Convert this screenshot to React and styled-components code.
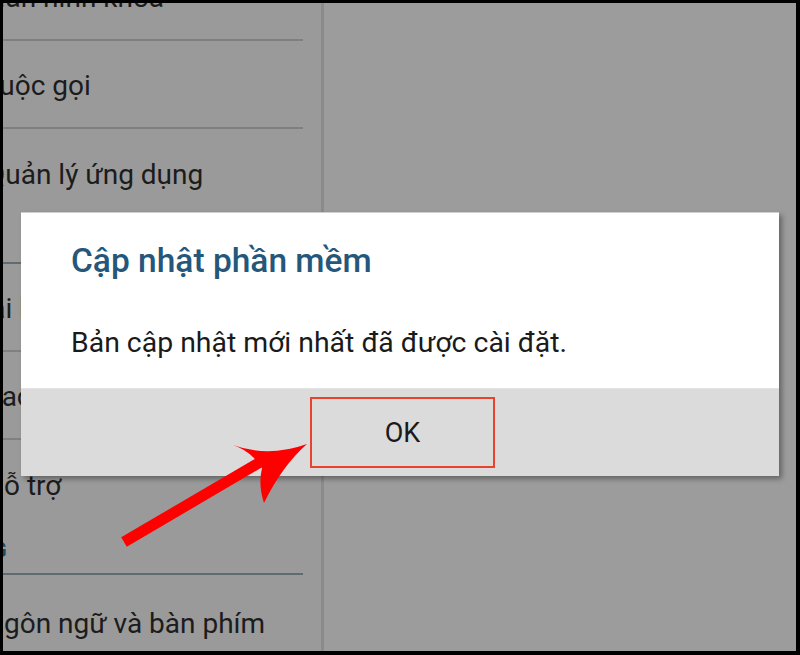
import React from "react";
import styled, { createGlobalStyle } from "styled-components";

const GlobalStyle = createGlobalStyle`
  html, body {
    margin: 0;
    padding: 0;
    background: #000;
  }
  * {
    box-sizing: border-box;
  }
`;

const Frame = styled.div`
  position: relative;
  width: 800px;
  height: 655px;
  background: #000;
  padding: 3px 4px 4px 3px;
  font-family: Roboto, "Noto Sans", "Liberation Sans", sans-serif;
`;

const Screen = styled.div`
  display: flex;
  height: 100%;
  overflow: hidden;
  background: #9c9c9c;
`;

const Sidebar = styled.div`
  width: 321px;
  flex-shrink: 0;
  padding-right: 18px;
  border-right: 3px solid #8b8b8b;
  background: #9a9a9a;
  overflow: hidden;
`;

const List = styled.div`
  display: flex;
  flex-direction: column;
  margin-top: -50px;
`;

const Row = styled.div`
  display: flex;
  align-items: center;
  height: 88px;
  border-bottom: ${(p) => (p.$last ? "none" : "2px solid #808080")};
  padding-top: ${(p) => p.$drop ?? 2}px;
`;

const RowText = styled.span`
  margin-left: ${(p) => p.$shift ?? -17}px;
  font-size: 28px;
  color: #1c1c1c;
  white-space: nowrap;
`;

const Header = styled.div`
  display: flex;
  align-items: flex-end;
  height: 47px;
  padding-bottom: 11px;
  border-bottom: 2px solid #5f6b70;
`;

const HeaderText = styled.span`
  margin-left: -10px;
  font-size: 20px;
  font-weight: 700;
  color: #1f4a63;
  white-space: nowrap;
`;

const Detail = styled.div`
  flex: 1;
  background: #9c9c9c;
`;

const Dialog = styled.div`
  position: absolute;
  left: 21px;
  top: 212px;
  width: 758px;
  height: 264px;
  display: flex;
  flex-direction: column;
  background: #fff;
  border-top: 1px solid #cfcfcf;
  box-shadow: 3px 3px 5px rgba(0, 0, 0, 0.35);
`;

const DialogBody = styled.div`
  height: 175px;
  padding: 24px 0 0 50px;
`;

const Title = styled.h2`
  margin: 0;
  font-size: 33.5px;
  font-weight: 500;
  color: #25577a;
  line-height: 48px;
  white-space: nowrap;
`;

const Message = styled.p`
  margin: 41px 0 0;
  font-size: 28.4px;
  color: #1a1a1a;
  line-height: 34px;
  white-space: nowrap;
`;

const Footer = styled.div`
  flex: 1;
  display: flex;
  align-items: center;
  justify-content: center;
  background: #dbdbdb;
  border-top: 1px solid #e4e4e4;
`;

const OkButton = styled.button`
  width: 185px;
  height: 71px;
  margin-left: 5px;
  border: 2px solid #e8432f;
  background: transparent;
  font-family: inherit;
  font-size: 27px;
  color: #1a1a1a;
  cursor: pointer;
`;

const Arrow = styled.svg`
  position: absolute;
  left: 0;
  top: 0;
  width: 800px;
  height: 655px;
  pointer-events: none;
`;

const items = [
  { label: "Màn hình khóa", shift: -22 },
  { label: "Cuộc gọi", shift: -22 },
  { label: "Quản lý ứng dụng", last: true },
];

const items2 = [
  { label: "Tài khoản", shift: -28 },
  { label: "Sao lưu và đặt lại", shift: -18 },
  { label: "Hỗ trợ", last: true, shift: -19 },
];

export default function App() {
  return (
    <>
      <GlobalStyle />
      <Frame>
        <Screen>
          <Sidebar>
            <List>
              {items.map((it) => (
                <Row key={it.label} $last={it.last}>
                  <RowText $shift={it.shift}>{it.label}</RowText>
                </Row>
              ))}
              {/* section header, its label sits under the dialog */}
              <Header />
              {items2.map((it) => (
                <Row key={it.label} $last={it.last}>
                  <RowText $shift={it.shift}>{it.label}</RowText>
                </Row>
              ))}
              <Header>
                <HeaderText>G</HeaderText>
              </Header>
              <Row $drop={10}>
                <RowText $shift={-19}>Ngôn ngữ và bàn phím</RowText>
              </Row>
            </List>
          </Sidebar>
          <Detail />
        </Screen>

        <Dialog>
          <DialogBody>
            <Title>Cập nhật phần mềm</Title>
            <Message>Bản cập nhật mới nhất đã được cài đặt.</Message>
          </DialogBody>
          <Footer>
            <OkButton>OK</OkButton>
          </Footer>
        </Dialog>

        <Arrow viewBox="0 0 800 655">
          <polygon
            fill="#ff0000"
            points="121.2,537.3 259.2,456.3 264.8,465.7 126.8,546.7"
          />
          <path
            fill="#ff0000"
            d="M233 445 Q268 458 307 444 Q282 466 264 503 Q258 485 262 468 L254 458 Q245 449 233 445 Z"
          />
        </Arrow>
      </Frame>
    </>
  );
}
